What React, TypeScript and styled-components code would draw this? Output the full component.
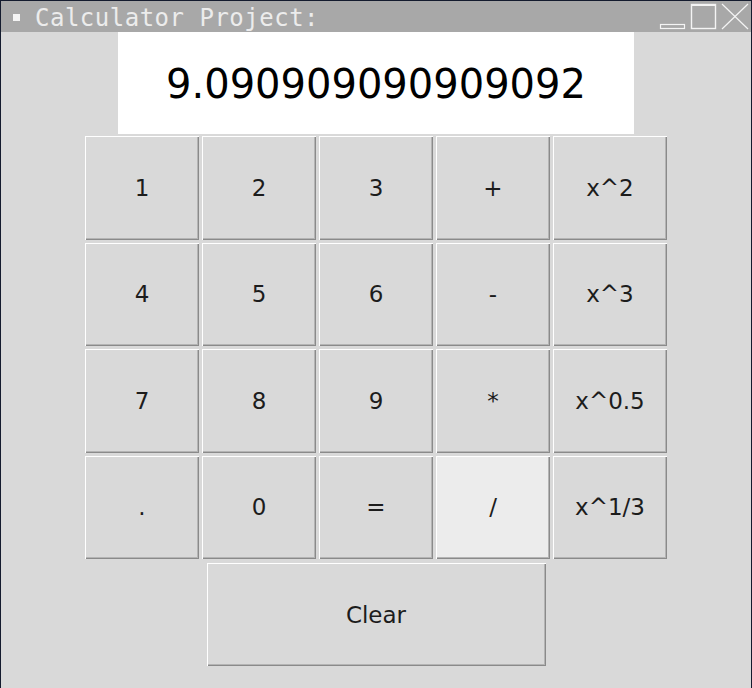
import React from "react";
import styled, { createGlobalStyle } from "styled-components";

const Global = createGlobalStyle`
  html, body { margin: 0; padding: 0; background: #d9d9d9; }
  body { width: 752px; height: 688px; overflow: hidden; }
`;

const Frame = styled.div`
  box-sizing: border-box;
  width: 752px;
  height: 688px;
  border: 1px solid #141b2e;
  border-bottom: none;
  background: #d9d9d9;
  display: flex;
  flex-direction: column;
`;

const TitleBar = styled.div`
  height: 31px;
  background: #a8a8a8;
  display: flex;
  align-items: center;
  flex-shrink: 0;
`;

const TitleIcon = styled.span`
  width: 7px;
  height: 7px;
  background: #f4f4f4;
  margin-left: 12px;
  margin-right: 16px;
  margin-top: 1px;
`;

const TitleText = styled.span`
  font-family: "DejaVu Sans Mono", monospace;
  font-size: 24px;
  color: #ececec;
  letter-spacing: 0.5px;
  flex: 1;
  line-height: 31px;
  padding-top: 4px;
  margin-left: -1px;
`;

const Controls = styled.svg`
  width: 92px;
  height: 31px;
  flex-shrink: 0;
`;

const Body = styled.div`
  display: flex;
  flex-direction: column;
  align-items: center;
  font-family: "DejaVu Sans", sans-serif;
`;

const Display = styled.div`
  width: 516px;
  height: 102px;
  background: #ffffff;
  display: flex;
  align-items: center;
  justify-content: center;
  font-size: 40px;
  color: #000;
  padding-top: 2px;
  box-sizing: border-box;
`;

const Grid = styled.div`
  margin-top: 2px;
  display: grid;
  grid-template-columns: repeat(5, 114px);
  grid-template-rows: repeat(4, 1fr);
  column-gap: 3px;
  row-gap: 3px;
  width: 582px;
  height: 423px;
`;

const Key = styled.button<{ $active?: boolean; $wide?: boolean }>`
  box-sizing: border-box;
  margin: 0;
  padding: 0;
  border: none;
  background: ${(p) => (p.$active ? "#ececec" : "#d9d9d9")};
  box-shadow: inset 1px 1px 0 #ffffff, inset -1px -1px 0 #8a8a8a,
    inset -2px -2px 0 #b4b4b4;
  font-family: "DejaVu Sans", sans-serif;
  font-size: 23px;
  color: #1c1c1c;
  display: flex;
  align-items: center;
  justify-content: center;
  width: ${(p) => (p.$wide ? "339px" : "auto")};
  height: ${(p) => (p.$wide ? "103px" : "auto")};
`;

const ClearRow = styled.div`
  margin-top: 4px;
  display: flex;
  justify-content: center;
`;

const keys = [
  "1", "2", "3", "+", "x^2",
  "4", "5", "6", "-", "x^3",
  "7", "8", "9", "*", "x^0.5",
  ".", "0", "=", "/", "x^1/3",
];

export default function App() {
  return (
    <>
      <Global />
      <Frame>
        <TitleBar>
          <TitleIcon />
          <TitleText>Calculator Project:</TitleText>
          <Controls viewBox="0 0 92 31">
            <rect x="1.5" y="23.5" width="24" height="4" fill="none" stroke="#f4f4f4" strokeWidth="1.2" />
            <rect x="32.5" y="3.5" width="24" height="24" fill="none" stroke="#f4f4f4" strokeWidth="1.4" />
            <line x1="32" y1="4" x2="57" y2="4" stroke="#f4f4f4" strokeWidth="2" />
            <line x1="63" y1="3" x2="89" y2="28" stroke="#f4f4f4" strokeWidth="1.2" />
            <line x1="89" y1="3" x2="63" y2="28" stroke="#f4f4f4" strokeWidth="1.2" />
          </Controls>
        </TitleBar>
        <Body>
          <Display>9.090909090909092</Display>
          <Grid>
            {keys.map((k) => (
              <Key key={k} $active={k === "/"}>
                {k}
              </Key>
            ))}
          </Grid>
          <ClearRow>
            <Key $wide>Clear</Key>
          </ClearRow>
        </Body>
      </Frame>
    </>
  );
}
